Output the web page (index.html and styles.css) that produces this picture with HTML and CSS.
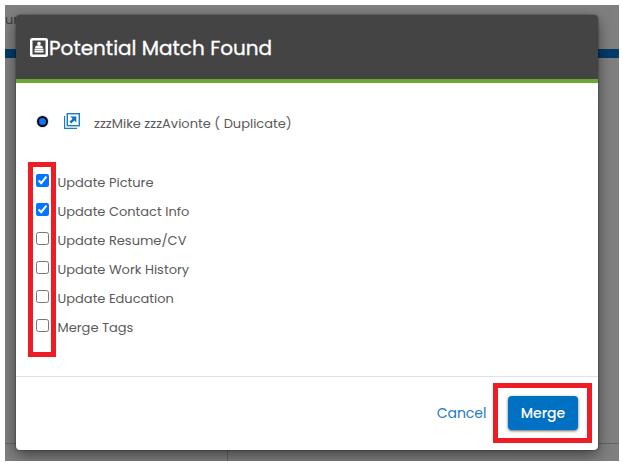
FILE: index.html
```html
<!DOCTYPE html>
<html lang="en">
<head>
    <meta charset="UTF-8">
    <meta name="viewport" content="width=device-width, initial-scale=1.0">
    <title>Potential Match Found</title>
    <link rel="stylesheet" href="styles.css">
</head>
<body>
    <div class="page">
        <div class="backdrop">
            <div class="page-title">ur</div>
            <div class="page-bar"></div>
            <div class="page-content"></div>
            <div class="page-footer"></div>
        </div>

        <div class="modal">
            <div class="modal-header">
                <svg class="header-icon" width="18" height="19" viewBox="0 0 18 19">
                    <rect x="1.25" y="1.25" width="15.5" height="16.5" rx="1" fill="none" stroke="#fff" stroke-width="2.5"/>
                    <circle cx="9" cy="5.6" r="1.8" fill="#fff"/>
                    <path d="M5.2 10.2V9.2C5.2 8 7 7.2 9 7.2s3.8.8 3.8 2v1zM4.5 10.8h9v1.6h-9zM4.5 13h9v1.6h-9z" fill="#fff"/>
                </svg>
                <h1>Potential Match Found</h1>
            </div>

            <div class="modal-body">
                <div class="match">
                    <span class="radio"></span>
                    <svg class="open-icon" width="16" height="16" viewBox="0 0 16 16">
                        <path d="M.6 3v12.4H13" fill="none" stroke="#1a7bc7" stroke-width="1.2"/>
                        <rect x="3.3" y=".7" width="12" height="12" fill="none" stroke="#1a7bc7" stroke-width="1.4"/>
                        <path d="M6.3 3.4h6v6l-2-2-3.1 3.1-1.7-1.7 3.1-3.1z" fill="#0f70bd"/>
                    </svg>
                    <span class="match-name">zzzMike zzzAvionte ( Duplicate)</span>
                </div>

                <div class="options">
                    <label class="option"><input type="checkbox" checked><span>Update Picture</span></label>
                    <label class="option"><input type="checkbox" checked><span>Update Contact Info</span></label>
                    <label class="option"><input type="checkbox"><span>Update Resume/CV</span></label>
                    <label class="option"><input type="checkbox"><span>Update Work History</span></label>
                    <label class="option"><input type="checkbox"><span>Update Education</span></label>
                    <label class="option"><input type="checkbox"><span>Merge Tags</span></label>
                    <div class="highlight highlight-options"></div>
                </div>
            </div>

            <div class="modal-footer">
                <a class="cancel">Cancel</a>
                <div class="merge-wrap">
                    <button class="merge">Merge</button>
                    <div class="highlight highlight-merge"></div>
                </div>
            </div>
        </div>
    </div>
</body>
</html>
```

FILE: styles.css
```css
* {
    box-sizing: border-box;
}

body {
    margin: 0;
    padding: 5px 4px 4px 5px;
    background: #fff;
    font-family: Poppins, Inter, sans-serif;
    font-size: 13px;
    color: #5a5a5a;
}

.page {
    position: relative;
    width: 614px;
    height: 456px;
    padding: 10px 21px 11px 11px;
    overflow: hidden;
}

/* dimmed page behind the dialog */
.backdrop {
    position: absolute;
    inset: 0;
    display: flex;
    flex-direction: column;
    background: #808080;
}

.page-title {
    height: 44px;
    padding-top: 6px;
    line-height: 18px;
    color: #404040;
}

.page-bar {
    height: 9px;
    background: #003c69;
}

.page-content {
    flex: 1;
    border-bottom: 1px solid #666;
}

.page-footer {
    width: 223px;
    height: 17px;
    border-right: 1px solid #666;
}

.modal {
    position: relative;
    display: flex;
    flex-direction: column;
    height: 435px;
    background: #fff;
    border-radius: 4px;
    box-shadow: 0 0 2px rgba(0, 0, 0, 0.6), 0 5px 15px rgba(0, 0, 0, 0.5);
}

.modal-header {
    display: flex;
    align-items: center;
    height: 68px;
    padding: 1px 14px 0;
    background: #444;
    border-bottom: 4px solid #6ca732;
    border-radius: 3px 3px 0 0;
    color: #fff;
}

h1 {
    margin: 0 0 0 1px;
    font-size: 20px;
    font-weight: 400;
    line-height: 30px;
    -webkit-text-stroke: 0.3px #fff;
}

.modal-body {
    flex: 1;
    padding: 28px 20px 0;
}

.match {
    display: flex;
    height: 24px;
}

.radio {
    width: 11px;
    height: 11px;
    margin: 5px 0 0 1px;
    background: #0a75ff;
    border: 2px solid #000;
    border-radius: 50%;
    box-shadow: 0 0 0 1px #cfe5f8;
}

.open-icon {
    margin: 2px 0 0 16px;
}

.match-name {
    margin: 3px 0 0 14px;
    line-height: 20px;
}

.options {
    position: relative;
    padding-top: 32px;
}

.option {
    display: flex;
    height: 29px;
    line-height: 20px;
}

.option input {
    width: 13px;
    height: 13px;
    margin: 7px 8.5px 0 0;
}

.option span {
    margin-top: 6px;
}

.highlight {
    position: absolute;
    border: 5px solid #ee1c25;
}

.highlight-options {
    top: 27px;
    left: -8px;
    width: 28px;
    height: 195px;
}

.modal-footer {
    display: flex;
    justify-content: flex-end;
    height: 74px;
    padding: 19px 20px 0;
    border-top: 1px solid #e2e2e2;
}

.cancel {
    margin-right: 21.5px;
    line-height: 34px;
    font-size: 14px;
    color: #1a7bc7;
}

.merge-wrap {
    position: relative;
}

.merge {
    display: block;
    width: 70px;
    height: 34px;
    padding: 0;
    background: #0070c2;
    border: 0;
    border-radius: 4px;
    box-shadow: 0 1px 3px rgba(0, 0, 0, 0.6);
    color: #fff;
    font-family: inherit;
    font-size: 14px;
    font-weight: 500;
}

.highlight-merge {
    top: -13px;
    left: -15px;
    width: 99px;
    height: 60px;
}
```
